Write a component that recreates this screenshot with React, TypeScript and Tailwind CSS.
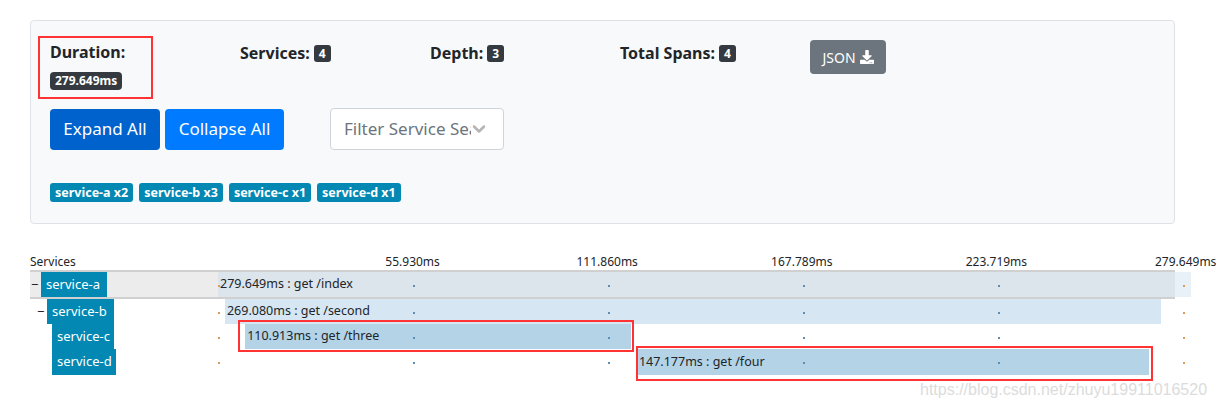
import { ChevronDown } from 'lucide-react';
import { FaDownload } from 'react-icons/fa';

const TOTAL = 279.649;
const SCALE = 973; // px for whole trace

const spans = [
  { name: 'service-a', depth: 0, toggle: true, start: 0, dur: 279.649, label: '279.649ms : get /index', bar: 'bg-[rgba(192,214,236,0.37)]', badgeW: 'w-[66px]' },
  { name: 'service-b', depth: 1, toggle: true, start: 2.0, dur: 269.08, label: '269.080ms : get /second', bar: 'bg-[#d6e7f3]', badgeW: 'w-[67px]' },
  { name: 'service-c', depth: 2, toggle: false, start: 7.8, dur: 110.913, label: '110.913ms : get /three', bar: 'bg-[#b4d3e7]', badgeW: 'w-[62px]' },
  { name: 'service-d', depth: 2, toggle: false, start: 120.4, dur: 147.177, label: '147.177ms : get /four', bar: 'bg-[#b4d3e7]', badgeW: 'w-[64px]' },
];

const ticks = ['55.930ms', '111.860ms', '167.789ms', '223.719ms', '279.649ms'];
const dotX = [0, 195, 390, 585, 780, 965];

function Stat({ label, value }: { label: string; value: string }) {
  return (
    <div className="w-[190px] shrink-0 flex items-center gap-1 text-[16px] font-bold text-[#212529]">
      {label}
      <span className="rounded-[3px] bg-[#343a40] text-white text-[12px] px-[5px] leading-[17px]">{value}</span>
    </div>
  );
}

export default function App() {
  return (
    <div className="relative w-[1216px] h-[408px] bg-white overflow-hidden font-['Noto_Sans',sans-serif] text-[#212529]">
      <div className="pt-5 pl-[30px]">
        <div className="w-[1145px] h-[204px] rounded-[4px] border border-[#dee2e6] bg-[#f8f9fa] pl-[19px] pt-[19px]">
          <div className="flex items-start">
            <div className="w-[190px] shrink-0 pt-[1px]">
              <div className="text-[16px] font-bold leading-[22px]">Duration:</div>
              <span className="inline-block mt-[9px] rounded-[4px] bg-[#343a40] text-white text-[12px] font-bold px-[5px] leading-[18px]">279.649ms</span>
            </div>
            <div className="pt-[1px] flex">
              <Stat label="Services:" value="4" />
              <Stat label="Depth:" value="3" />
              <Stat label="Total Spans:" value="4" />
            </div>
            <button className="h-[34px] w-[76px] rounded-[4px] bg-[#6c757d] text-white text-[14px] flex items-center justify-center gap-[4px]">
              JSON <FaDownload className="w-[14px] h-[14px]" />
            </button>
          </div>

          <div className="flex items-center mt-[17px]">
            <button className="h-[41px] w-[110px] rounded-[4px] bg-[#0062cc] text-white text-[17px]">Expand All</button>
            <button className="ml-[5px] h-[41px] w-[119px] rounded-[4px] bg-[#007bff] text-white text-[17px]">Collapse All</button>
            <div className="ml-[46px] h-[42px] w-[174px] rounded-[4px] border border-[#ced4da] bg-white flex items-center pl-[13px]">
              <span className="text-[17px] text-[#6c757d] whitespace-nowrap w-[127px] overflow-hidden">Filter Service Sea</span>
              <ChevronDown className="w-[20px] h-[20px] text-[#b5b5b5] -ml-[2px]" strokeWidth={3} />
            </div>
          </div>

          <div className="flex gap-[6px] mt-[33px]">
            {['service-a x2', 'service-b x3', 'service-c x1', 'service-d x1'].map((s) => (
              <span key={s} className="rounded-[3px] bg-[#0288b3] text-white text-[12.5px] font-bold px-[5px] leading-[19px]">{s}</span>
            ))}
          </div>
        </div>
      </div>

      {/* timeline */}
      <div className="ml-[30px] mt-[29px] w-[1145px]">
        <div className="flex h-[17px] items-end">
          <div className="w-[188px] shrink-0 text-[12px] leading-[16px]">Services</div>
          <div className="relative w-[973px] shrink-0 h-[16px]">
            {ticks.map((t, i) => (
              <span
                key={t}
                className={i === 4 ? 'absolute text-[12px] leading-[16px] whitespace-nowrap' : 'absolute text-[12px] leading-[16px] whitespace-nowrap -translate-x-1/2'}
                style={{ left: i === 4 ? 937 : (i + 1) * 194.6 }}
              >
                {t}
              </span>
            ))}
          </div>
        </div>
        <div className="border-t-2 border-[#d0d0d0]">
          {spans.map((s, i) => (
            <div key={s.name} className={i === 0 ? 'flex h-[27px] bg-[#ececec] border-b-2 border-[#d0d0d0]' : i === 3 ? 'flex h-[26px]' : 'flex h-[25px]'}>
              <div className="w-[188px] shrink-0 flex items-stretch">
                <div
                  className="flex items-center"
                  style={{ paddingLeft: s.depth === 0 ? 1 : s.depth === 1 ? 7 : 22 }}
                >
                  {s.toggle && <span className="w-[10px] text-[13px] leading-none">−</span>}
                  <span className={`${s.badgeW} h-full bg-[#0288b3] text-white text-[13px] flex items-center pl-[5px]`}>{s.name}</span>
                </div>
              </div>
              <div className="relative w-[973px] shrink-0 h-full">
                <div
                  className={`absolute top-0 h-full ${s.bar} flex items-center text-[12.5px] whitespace-nowrap pl-[2px]`}
                  style={{ left: (s.start / TOTAL) * SCALE, width: (s.dur / TOTAL) * SCALE }}
                >
                  {s.label}
                </div>
                {dotX.map((x, j) => (
                  <span
                    key={x}
                    className={j === 5 || j === 0 ? 'absolute top-1/2 w-[2px] h-[2px] bg-[#d99c5a]' : 'absolute top-1/2 w-[2px] h-[2px] bg-[#5d8fb5]'}
                    style={{ left: x }}
                  />
                ))}
              </div>
            </div>
          ))}
        </div>
      </div>

      <div className="absolute left-[920px] top-[378px] text-[16px] text-[#dcdcdc] font-['Liberation_Sans',sans-serif] whitespace-nowrap">
        https://blog.csdn.net/zhuyu19911016520
      </div>

      {/* annotation boxes */}
      <div className="absolute left-[38px] top-[36px] w-[115px] h-[63px] border-2 border-[#f33]" />
      <div className="absolute left-[238px] top-[320px] w-[396px] h-[32px] border-2 border-[#f33]" />
      <div className="absolute left-[636px] top-[346px] w-[517px] h-[35px] border-2 border-[#f33]" />
    </div>
  );
}
